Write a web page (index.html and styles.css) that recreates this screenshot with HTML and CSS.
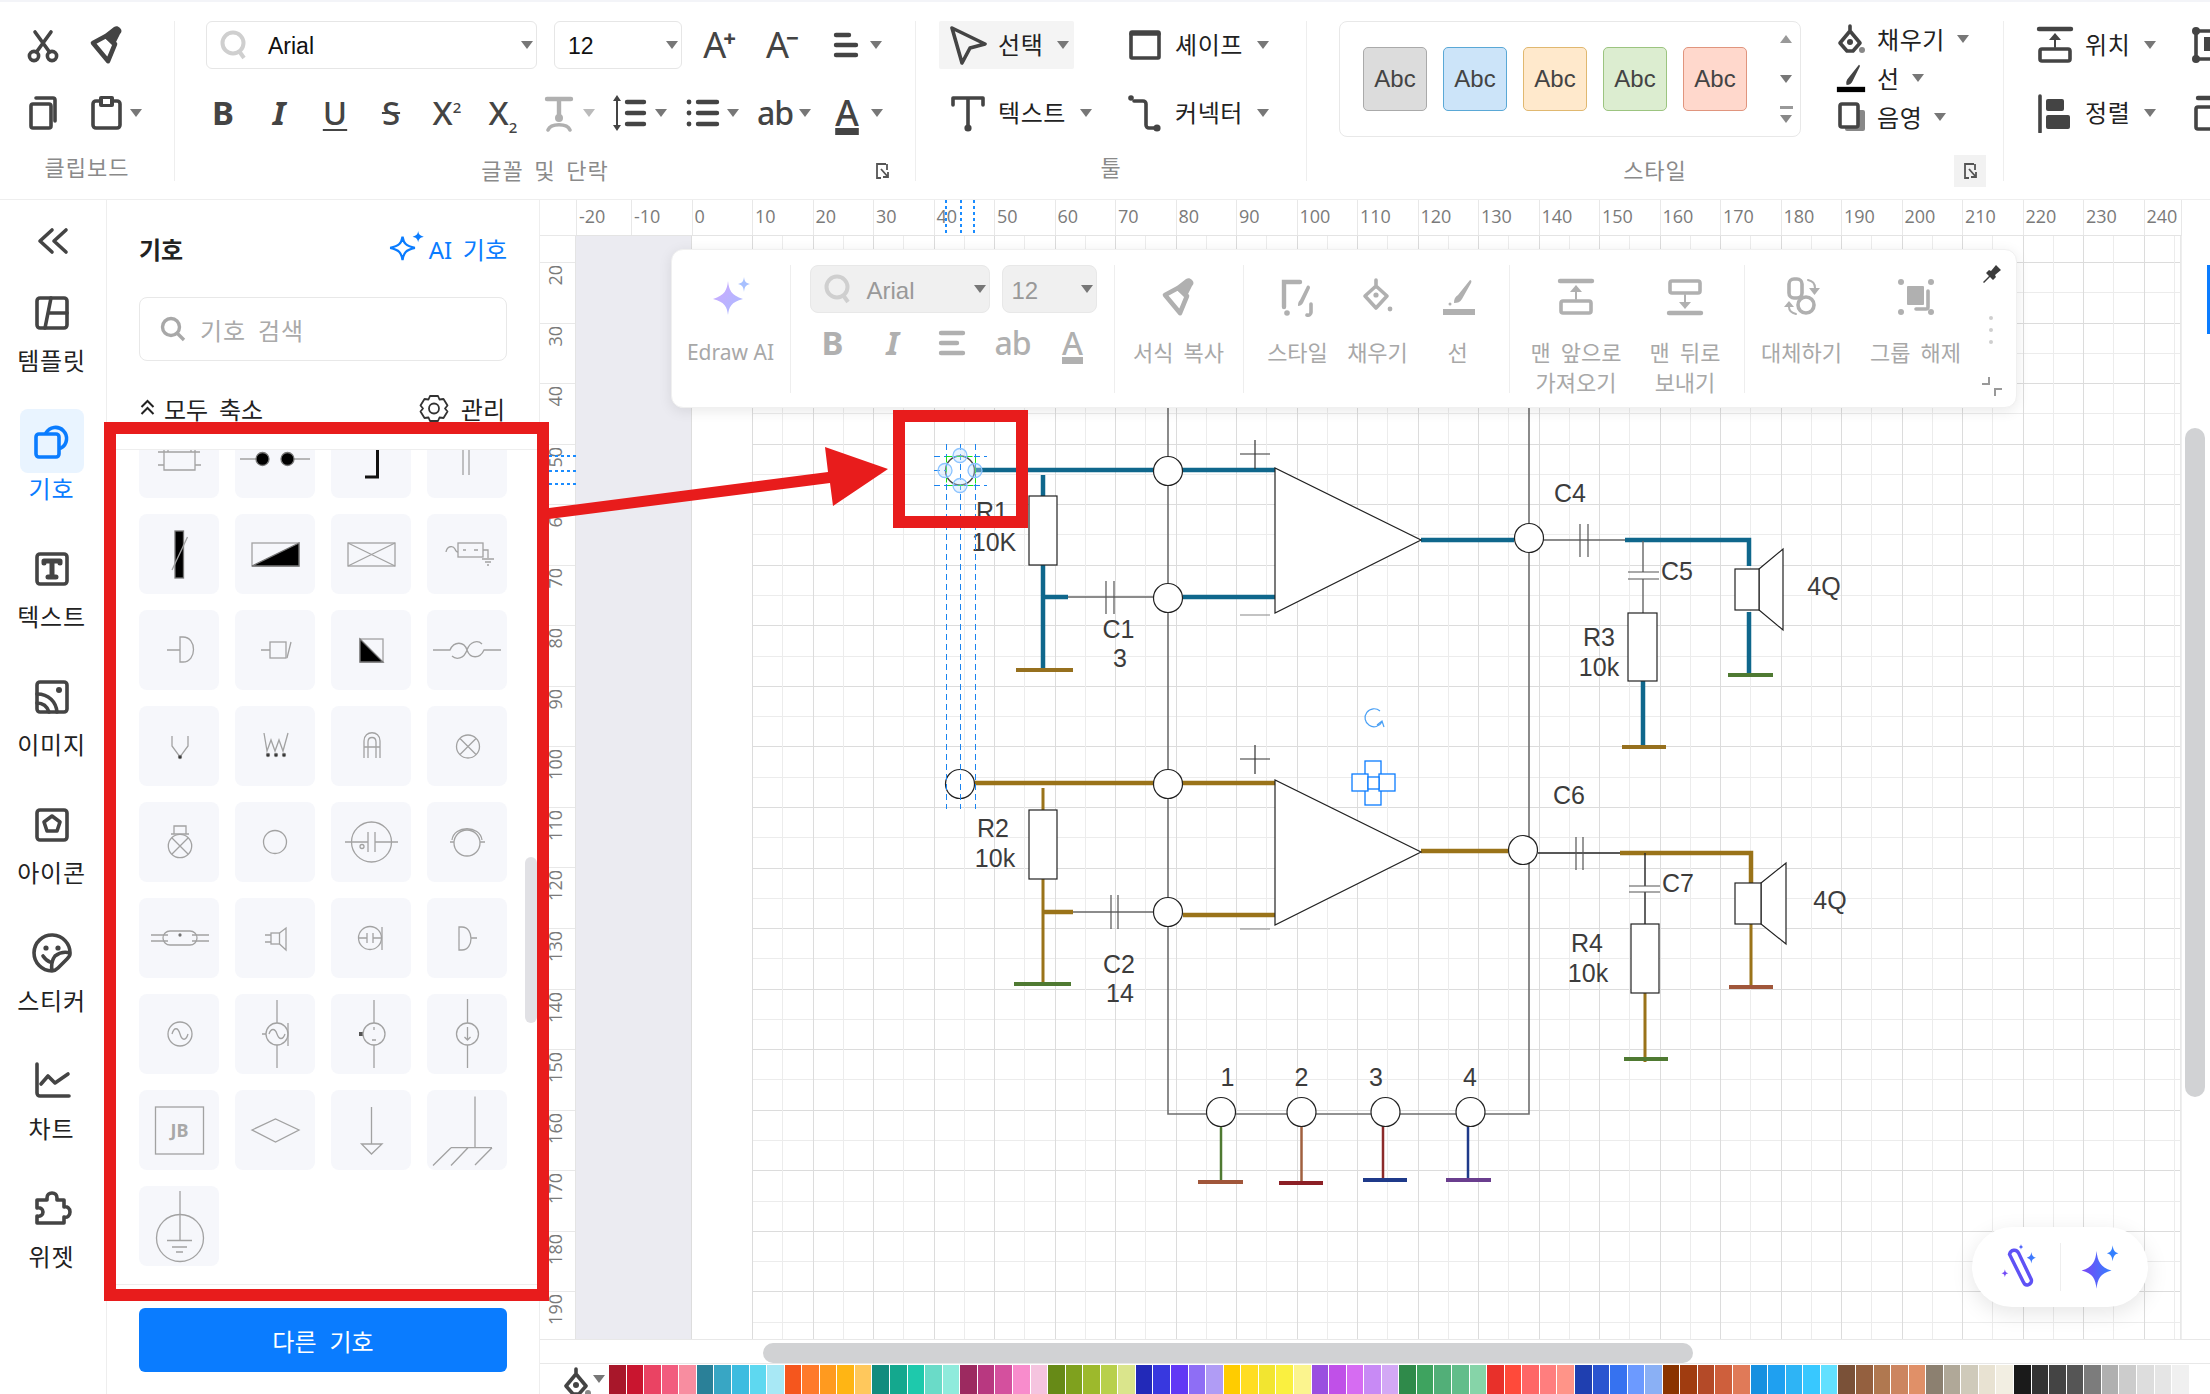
FILE: index.html
```html
<!DOCTYPE html>
<html lang="ko">
<head>
<meta charset="utf-8">
<title>기호</title>
<link rel="stylesheet" href="styles.css">
</head>
<body>
<svg class="defs" aria-hidden="true">
  <defs>
    <linearGradient id="gStar" x1="0" y1="0" x2="1" y2="1"><stop offset="0" stop-color="#d0a8ff"/><stop offset="1" stop-color="#a8bcff"/></linearGradient>
    <linearGradient id="gBub" x1="0" y1="0" x2="1" y2="0"><stop offset="0" stop-color="#7a45f5"/><stop offset="1" stop-color="#3480ff"/></linearGradient>
  </defs>
  <symbol id="i-cut" viewBox="0 0 40 40"><g class="st"><circle cx="11" cy="31" r="4.6"/><circle cx="29" cy="31" r="4.6"/><path d="M13.5 27 28 7M26.5 27 12 7"/></g></symbol>
  <symbol id="i-brush" viewBox="0 0 40 40"><path class="st-b" d="M6 18 19 11l9 8-7 17z"/><path class="fl" d="M18 9l9-7c2-1 4-1 6 1s2 4 0 6l-5 10-3 1-8-8z"/></symbol>
  <symbol id="i-copy" viewBox="0 0 40 40"><rect class="st" x="8" y="11" width="20" height="24" rx="2"/><path class="st" d="M13 5h17a2 2 0 0 1 2 2v21"/></symbol>
  <symbol id="i-paste" viewBox="0 0 40 40"><rect class="st" x="6" y="8" width="27" height="27" rx="3"/><rect class="fl" x="12" y="3" width="15" height="11" rx="2"/><rect class="wh" x="16" y="6" width="7" height="5"/></symbol>
  <symbol id="i-align" viewBox="0 0 40 40"><path class="st4" d="M9 10h13M9 20h20M9 30h20"/></symbol>
  <symbol id="i-alignc" viewBox="0 0 40 40"><path class="st4" d="M8 10h22M8 20h16M8 30h22"/></symbol>
  <symbol id="i-fmt" viewBox="0 0 40 40"><path class="st4" d="M8 6h24M20 6v18"/><circle class="fl" cx="20" cy="25" r="4"/><path class="st" d="M9 37c3-7 19-7 22 0"/></symbol>
  <symbol id="i-lsp" viewBox="0 0 40 40"><path class="st4" d="M16 9h17M16 20h17M16 31h17"/><path class="st2" d="M6 7v26"/><path class="fl" d="M6 2l4 6H2zM6 38l4-6H2z"/></symbol>
  <symbol id="i-list" viewBox="0 0 40 40"><path class="st4" d="M15 9h19M15 20h19M15 31h19"/><circle class="fl" cx="6" cy="9" r="2.4"/><circle class="fl" cx="6" cy="20" r="2.4"/><circle class="fl" cx="6" cy="31" r="2.4"/></symbol>
  <symbol id="i-select" viewBox="0 0 40 40"><path class="st" d="M4 3 37 19l-15 4-8 15z"/></symbol>
  <symbol id="i-shape" viewBox="0 0 40 40"><rect class="st" x="6" y="7" width="28" height="26" rx="1"/><path class="st" d="M6 9h28"/></symbol>
  <symbol id="i-text" viewBox="0 0 40 40"><path class="st" d="M5 12V5h30v7M20 5v28"/><circle class="fl" cx="20" cy="35" r="3.6"/></symbol>
  <symbol id="i-conn" viewBox="0 0 40 40"><circle class="fl" cx="6" cy="5" r="2.8"/><path class="st" d="M9 8h9a3 3 0 0 1 3 3v21a3 3 0 0 0 3 3h5"/><circle class="fl" cx="32" cy="35" r="3.6"/></symbol>
  <symbol id="i-launch" viewBox="0 0 20 20"><path class="ln" d="M14 3H5v14h4M15 3v6M9 8l7 8M16 11v5h-5"/></symbol>
  <symbol id="i-fill" viewBox="0 0 30 30"><path class="st" d="M14 2v5M14 7 4 19l7 8h6l7-8z"/><circle class="fl" cx="14" cy="18" r="3"/><circle class="gr" cx="26" cy="26" r="3"/></symbol>
  <symbol id="i-line" viewBox="0 0 34 34"><path class="fl" d="M26 2c1 0 1 1 1 2l-8 16c-1 3-4 5-7 5-1-3 0-6 2-8z"/><rect class="blk" x="1" y="27" width="32" height="6"/></symbol>
  <symbol id="i-shadow" viewBox="0 0 30 30"><rect class="gr" x="9" y="8" width="20" height="21" rx="2"/><rect class="stw" x="4" y="2" width="18" height="23" rx="2"/></symbol>
  <symbol id="i-pos" viewBox="0 0 40 40"><path class="st4" d="M4 4h32"/><path class="st2" d="M20 22V10"/><path class="fl" d="M20 8l6 7H14z"/><rect class="st" x="5" y="24" width="30" height="12" rx="2"/></symbol>
  <symbol id="i-back" viewBox="0 0 40 40"><path class="st4" d="M4 36h32"/><path class="st2" d="M20 18v12"/><path class="fl" d="M20 32l-6-7h12z"/><rect class="st" x="5" y="4" width="30" height="12" rx="2"/></symbol>
  <symbol id="i-arr" viewBox="0 0 40 40"><path class="st" d="M5 3v36"/><rect class="fl" x="11" y="6" width="18" height="12" rx="2"/><rect class="fl" x="11" y="22" width="24" height="14" rx="2"/></symbol>
  <symbol id="i-grp" viewBox="0 0 40 40"><rect class="st" x="6" y="6" width="28" height="28" rx="2"/><circle class="fl" cx="6" cy="6" r="4"/><circle class="fl" cx="34" cy="6" r="4"/><circle class="fl" cx="6" cy="34" r="4"/><circle class="fl" cx="34" cy="34" r="4"/><rect class="fl" x="14" y="12" width="12" height="14"/></symbol>
  <symbol id="i-ord" viewBox="0 0 40 40"><path class="st4" d="M8 5h24"/><rect class="st" x="6" y="14" width="28" height="22" rx="2"/></symbol>
  <symbol id="i-style" viewBox="0 0 40 40"><path class="st4" d="M6 30V5h16"/><path class="fl" d="M29 9c2-1 3 0 3 2l-7 15c-1 2-3 3-5 3 0-2 0-4 2-6z"/><circle class="fl" cx="9" cy="36" r="2.8"/><path class="st" d="M33 27v8a3 3 0 0 1-4 3"/></symbol>
  <symbol id="i-fill2" viewBox="0 0 40 40"><path class="st" d="M18 3v7M18 9 7 19l11 12 11-12z"/><circle class="fl" cx="18" cy="18" r="2.6"/><circle class="fl" cx="32" cy="32" r="2.4"/></symbol>
  <symbol id="i-line2" viewBox="0 0 40 40"><path class="fl" d="M32 3c1 0 2 1 1 3l-9 16c-2 3-4 4-8 4 0-4 1-6 4-8z"/><circle class="fl" cx="12" cy="27" r="1.5"/><rect class="fl" x="5" y="32" width="32" height="6"/></symbol>
  <symbol id="i-rep" viewBox="0 0 40 40"><rect class="st" x="7" y="2" width="13" height="19" rx="5"/><circle class="st" cx="24" cy="28" r="8"/><path class="st2" d="M26 3c5 1 7 4 7 8"/><path class="fl" d="M27 11h11l-5.500 7z"/><path class="st2" d="M14 37c-4-1-7-3-7-7"/><path class="fl" d="M2 30h10l-5-6z"/></symbol>
  <symbol id="i-ungrp" viewBox="0 0 40 40"><circle class="fl" cx="5" cy="5" r="3"/><circle class="fl" cx="35" cy="5" r="3"/><circle class="fl" cx="5" cy="35" r="3"/><circle class="fl" cx="35" cy="35" r="3"/><rect class="fl" x="11" y="9" width="17" height="19" rx="1"/><path class="st" d="M32 14v16a2 2 0 0 1-2 2H20"/></symbol>
</svg>

<div class="app">
  <header class="ribbon">
    <section class="group g-clip">
      <div class="clip-grid">
        <div class="cell"><svg class="ic"><use href="#i-cut"/></svg></div>
        <div class="cell"><svg class="ic"><use href="#i-brush"/></svg></div>
        <div class="cell"><svg class="ic"><use href="#i-copy"/></svg></div>
        <div class="cell"><svg class="ic"><use href="#i-paste"/></svg><i class="caret caret-near"></i></div>
      </div>
      <div class="glabel"><span></span><span>클립보드</span><span></span></div>
    </section>

    <section class="group g-font">
      <div class="font-row1">
        <div class="combo combo-font"><svg class="q" viewBox="0 0 28 32"><circle cx="13" cy="14" r="10.500"/><path d="M19 22l5 7"/></svg><span class="combo-t">Arial</span><i class="caret"></i></div>
        <div class="combo combo-size"><span class="combo-t">12</span><i class="caret"></i></div>
        <span class="g g-a">A<sup>+</sup></span>
        <span class="g g-a g-am">A<sup>−</sup></span>
        <svg class="ic ic-align"><use href="#i-align"/></svg><i class="caret caret-gap"></i>
      </div>
      <div class="font-row2">
        <span class="g2 bold">B</span>
        <span class="g2 it">I</span>
        <span class="g2"><span class="u">U</span></span>
        <span class="g2"><span class="s">S</span></span>
        <span class="g2">X<sup>2</sup></span>
        <span class="g2">X<sub>2</sub></span>
        <div class="drop first"><svg class="ic ic-fmt"><use href="#i-fmt"/></svg><i class="caret caret-light"></i></div>
        <div class="drop"><svg class="ic"><use href="#i-lsp"/></svg><i class="caret"></i></div>
        <div class="drop"><svg class="ic"><use href="#i-list"/></svg><i class="caret"></i></div>
        <div class="drop"><span class="g2 ab">ab</span><i class="caret"></i></div>
        <div class="drop"><span class="g2 ua">A</span><i class="caret"></i></div>
      </div>
      <div class="glabel"><span></span><span>글꼴 및 단락</span><span class="launch"><svg class="ic-l"><use href="#i-launch"/></svg></span></div>
    </section>

    <section class="group g-tools">
      <div class="tool-grid">
        <div class="tool tool-on"><svg class="ic"><use href="#i-select"/></svg><span>선택</span><i class="caret"></i></div>
        <div class="tool"><svg class="ic"><use href="#i-shape"/></svg><span>셰이프</span><i class="caret"></i></div>
        <div class="tool"><svg class="ic"><use href="#i-text"/></svg><span>텍스트</span><i class="caret"></i></div>
        <div class="tool"><svg class="ic"><use href="#i-conn"/></svg><span>커넥터</span><i class="caret"></i></div>
      </div>
      <div class="glabel"><span></span><span>툴</span><span></span></div>
    </section>

    <section class="group g-style">
      <div class="style-row">
        <div class="style-box">
          <span class="abc a1">Abc</span><span class="abc a2">Abc</span><span class="abc a3">Abc</span><span class="abc a4">Abc</span><span class="abc a5">Abc</span>
          <div class="scroller"><i class="caret caret-up"></i><i class="caret"></i><i class="caret caret-end"></i></div>
        </div>
        <div class="fmt-col">
          <div class="fmt"><svg class="ic-s"><use href="#i-fill"/></svg><span>채우기</span><i class="caret"></i></div>
          <div class="fmt"><svg class="ic-s"><use href="#i-line"/></svg><span>선</span><i class="caret"></i></div>
          <div class="fmt"><svg class="ic-s"><use href="#i-shadow"/></svg><span>음영</span><i class="caret"></i></div>
        </div>
      </div>
      <div class="glabel"><span></span><span>스타일</span><span class="launch launch-on"><svg class="ic-l"><use href="#i-launch"/></svg></span></div>
    </section>

    <section class="group g-arrange">
      <div class="arr-grid">
        <div class="tool"><svg class="ic"><use href="#i-pos"/></svg><span>위치</span><i class="caret"></i></div>
        <svg class="ic ic-cut"><use href="#i-grp"/></svg>
        <div class="tool"><svg class="ic"><use href="#i-arr"/></svg><span>정렬</span><i class="caret"></i></div>
        <svg class="ic ic-cut"><use href="#i-ord"/></svg>
      </div>
    </section>
  </header>

  <main class="main">
    <nav class="rail">
      <div class="rail-top"><svg class="rail-svg" viewBox="0 0 40 40"><path d="M19 9 7 20l12 11M33 9 21 20l12 11"/></svg></div>
      <div class="rail-item"><div class="rail-ico"><svg class="rail-svg" viewBox="0 0 40 40"><rect x="5" y="5" width="30" height="30" rx="3"/><path d="M19 5 13 35M17 20h18"/></svg></div><span>템플릿</span></div>
      <div class="rail-item on"><div class="rail-ico"><svg class="rail-svg" viewBox="0 0 40 40"><rect x="4" y="13" width="23" height="23" rx="3"/><path d="M14 12a11 11 0 1 1 15 15"/></svg></div><span>기호</span></div>
      <div class="rail-item"><div class="rail-ico"><svg class="rail-svg" viewBox="0 0 40 40"><rect x="5" y="5" width="30" height="30" rx="3"/><path class="thick" d="M12 14v-2h16v2M20 12v16M16 28h8"/></svg></div><span>텍스트</span></div>
      <div class="rail-item"><div class="rail-ico"><svg class="rail-svg" viewBox="0 0 40 40"><rect x="5" y="5" width="30" height="30" rx="3"/><path d="M5 17c12 0 19 8 20 18M5 26c6 0 10 3 12 9" /><circle class="dot" cx="27" cy="13" r="3"/></svg></div><span>이미지</span></div>
      <div class="rail-item"><div class="rail-ico"><svg class="rail-svg" viewBox="0 0 40 40"><rect x="5" y="5" width="30" height="30" rx="3"/><path d="M20 11l8 6-3 9H15l-3-9z"/></svg></div><span>아이콘</span></div>
      <div class="rail-item"><div class="rail-ico"><svg class="rail-svg" viewBox="0 0 40 40"><path d="M38 21A18 18 0 1 0 20 38c2 0 4-1 6-3l9-9c2-2 3-3 3-5zM38 20c-6-2-11 0-15 3-3 4-4 9-3 15"/><circle class="dot" cx="14" cy="15" r="2.600"/><circle class="dot" cx="26" cy="15" r="2.600"/><path d="M11 23c2 3 4 5 7 6"/></svg></div><span>스티커</span></div>
      <div class="rail-item"><div class="rail-ico"><svg class="rail-svg" viewBox="0 0 40 40"><path d="M5 3v29a3 3 0 0 0 3 3h29M9 23l7-8 7 7 13-9"/></svg></div><span>차트</span></div>
      <div class="rail-item"><div class="rail-ico"><svg class="rail-svg" viewBox="0 0 40 40"><path d="M15 9c0-3 2-5 5-5s5 2 5 5v2h7v7c3-1 6 1 6 5s-3 6-6 5v6H5v-7c3 1 6-1 6-4s-3-5-6-4v-8h10z"/></svg></div><span>위젯</span></div>
    </nav>

    <aside class="panel">
      <div class="p-head">
        <h2 class="p-title">기호</h2>
        <div class="p-ai"><svg class="p-ai-ic" viewBox="0 0 34 34"><path class="ai-o" d="M13 6c1 6 3 8 11 10-8 2-10 4-11 11-1-7-3-9-11-11 8-2 10-4 11-10z"/><path class="ai-f" d="M27 1c.5 3 1.500 4 5 5-3.500 1-4.500 2-5 5-.5-3-1.500-4-5-5 3.500-1 4.500-2 5-5z"/></svg><span>AI 기호</span></div>
      </div>
      <div class="p-search"><svg class="p-s-ic" viewBox="0 0 28 28"><circle cx="12" cy="12" r="8.500"/><path d="M18 18l7 7"/></svg><span>기호 검색</span></div>
      <div class="p-row">
        <div class="p-col"><svg class="p-chev" viewBox="0 0 16 18"><path d="M2 8l6-6 6 6M2 15l6-6 6 6"/></svg><span>모두 축소</span></div>
        <div class="p-mng"><svg class="p-gear" viewBox="0 0 30 30"><path d="M11 3h8l1.500 3.500 4-.5 4 6.500-2.500 3 2.500 3-4 6.500-4-.5L19 28h-8l-1.500-3.500-4 .5-4-6.500 2.500-3-2.500-3 4-6.500 4 .5z"/><circle cx="15" cy="15.500" r="5"/></svg><span>관리</span></div>
      </div>
      <div class="p-list">
        <div class="sym-grid">
          <div class="sym"><svg viewBox="0 0 80 80"><path d="M19 34h42M25 30v22h31V30M19 47h6M56 47h6M29 34v-4M52 34v-4"/></svg></div>
          <div class="sym"><svg viewBox="0 0 80 80"><path d="M5 41h17M58 41h17"/><circle class="k" cx="27.500" cy="41" r="6.500"/><circle class="k" cx="52.500" cy="41" r="6.500"/></svg></div>
          <div class="sym"><svg viewBox="0 0 80 80"><path class="kl" d="M46.500 30v29H34"/></svg></div>
          <div class="sym"><svg viewBox="0 0 80 80"><path d="M36 30v27M42 30v27"/></svg></div>

          <div class="sym"><svg viewBox="0 0 80 80"><rect class="k" x="36" y="17" width="8.500" height="47"/><path d="M33 56 48.500 23"/></svg></div>
          <div class="sym"><svg viewBox="0 0 80 80"><rect x="17" y="29" width="47" height="23"/><path class="k" d="M17 52 64 29v23z"/></svg></div>
          <div class="sym"><svg viewBox="0 0 80 80"><rect x="17" y="29" width="47" height="23"/><path d="M17 29 64 52M64 29 17 52"/></svg></div>
          <div class="sym"><svg viewBox="0 0 80 80"><rect x="31" y="29" width="25" height="14"/><path d="M19 38c1-6 7-7 9-3 1 3 2 3 3 3M36 36h3M47 36h4M56 36h5v8M55 45h12M58 48h6M60 51h2"/></svg></div>

          <div class="sym"><svg viewBox="0 0 80 80"><path d="M28 40h13M41 27h3c14 0 14 25 0 25h-3z"/></svg></div>
          <div class="sym"><svg viewBox="0 0 80 80"><path d="M26 40h9M52 48l4-16"/><rect x="35" y="32" width="16" height="16"/></svg></div>
          <div class="sym"><svg viewBox="0 0 80 80"><rect x="29" y="29" width="23" height="23"/><path class="k" d="M29 29 52 52H29z"/></svg></div>
          <div class="sym"><svg viewBox="0 0 80 80"><path d="M6 40h17c4-9 14-9 17 0 3 9 13 9 17 0h17M40 40c3-9 11-10 15-6M40 40c-3 9-11 10-15 6"/></svg></div>

          <div class="sym"><svg viewBox="0 0 80 80"><path d="M33 30v10l8 11 8-11V30"/><circle class="k" cx="41" cy="51" r="1.500"/></svg></div>
          <div class="sym"><svg viewBox="0 0 80 80"><path d="M29 27l3 18 4-11 4 11 4-11 4 11 5-18"/><circle class="k" cx="33" cy="49" r="1.500"/><circle class="k" cx="41" cy="49" r="1.500"/><circle class="k" cx="49" cy="49" r="1.500"/></svg></div>
          <div class="sym"><svg viewBox="0 0 80 80"><path d="M33 52V35c0-11 16-11 16 0v17M33 41h16M37 52V36c0-6 8-6 8 0v16"/></svg></div>
          <div class="sym"><svg viewBox="0 0 80 80"><circle cx="41" cy="40.500" r="11.500"/><path d="M33 32.500l16 16M49 32.500l-16 16"/></svg></div>

          <div class="sym"><svg viewBox="0 0 80 80"><circle cx="41" cy="44" r="11.700"/><path d="M33 36l16 16M49 36 33 52M35 32V24h12v8M32 32h18"/></svg></div>
          <div class="sym"><svg viewBox="0 0 80 80"><circle cx="40" cy="40" r="11.500"/></svg></div>
          <div class="sym"><svg viewBox="0 0 80 80"><circle cx="40.500" cy="40" r="20"/><path d="M14 40h23M44 40h23M37 30v20M44 30v20"/><circle cx="31" cy="44.500" r="2"/></svg></div>
          <div class="sym"><svg viewBox="0 0 80 80"><circle cx="40" cy="41" r="13"/><path d="M23 40h4M53 40h5M25 38c2-15 28-15 30 0"/></svg></div>

          <div class="sym"><svg viewBox="0 0 80 80"><rect x="24" y="33" width="34" height="14" rx="7"/><path d="M12 37h17M12 43h17M53 37h17M53 43h17"/><circle class="k" cx="41" cy="37" r="1"/></svg></div>
          <div class="sym"><svg viewBox="0 0 80 80"><rect x="36" y="35" width="8.500" height="11"/><path d="M44.500 35 51 30v22l-6.500-6M30 37h6M30 44h6"/></svg></div>
          <div class="sym"><svg viewBox="0 0 80 80"><circle cx="39" cy="40" r="11.500"/><path d="M28 40h8M42 40h8M36 35v10M42 35v10M51 29v23"/></svg></div>
          <div class="sym"><svg viewBox="0 0 80 80"><path d="M32 29h3c12 0 12 23 0 23h-3zM44 40h6"/></svg></div>

          <div class="sym"><svg viewBox="0 0 80 80"><circle cx="41" cy="40" r="12"/><path d="M33 40c2-7 6-7 8 0s6 7 8 0"/></svg></div>
          <div class="sym"><svg viewBox="0 0 80 80"><path d="M42 6v23M42 51v23M53 29v23M27 40h4"/><circle cx="42" cy="40" r="11"/><path d="M34 40c2-6 6-6 8 0s6 6 8 0"/></svg></div>
          <div class="sym"><svg viewBox="0 0 80 80"><path class="kb" d="M28 40h4"/><path d="M43 6v23M43 51v23M43 33v3M41 46h4"/><circle cx="43" cy="40" r="11"/></svg></div>
          <div class="sym"><svg viewBox="0 0 80 80"><path d="M40.500 5v24M40.500 51v23M40.500 33v13M37.500 43l3 3 3-3"/><circle cx="40.500" cy="40" r="11"/></svg></div>

          <div class="sym"><svg viewBox="0 0 80 80"><rect x="16.500" y="17" width="48" height="47"/><text class="jb" x="40.500" y="47">JB</text></svg></div>
          <div class="sym"><svg viewBox="0 0 80 80"><path d="M17 40 40.500 29 64 40 40.500 52z"/></svg></div>
          <div class="sym"><svg viewBox="0 0 80 80"><path d="M40.500 17v37M30.500 54H51L40.500 64z"/></svg></div>
          <div class="sym"><svg viewBox="0 0 80 80"><path d="M48 6.500v51M24 57.700h41M24 57.700 6 75.500M41 57.700 24 75.500M65 57.700 48 75"/></svg></div>

          <div class="sym"><svg viewBox="0 0 80 80"><path d="M41 5v49M28 54.500h25M33 61h15M37 66h7"/><circle cx="41" cy="52" r="23.500"/></svg></div>
        </div>
        <div class="p-thumb"></div>
      </div>
      <button class="p-btn" type="button">다른 기호</button>
    </aside>

    <div class="workspace">
      <div class="corner"></div>
      <div class="hruler">
        <span class="ht ht-first">-20</span><span class="ht">-10</span><span class="ht">0</span><span class="ht">10</span><span class="ht">20</span><span class="ht">30</span><span class="ht">40</span><span class="ht">50</span><span class="ht">60</span><span class="ht">70</span><span class="ht">80</span><span class="ht">90</span><span class="ht">100</span><span class="ht">110</span><span class="ht">120</span><span class="ht">130</span><span class="ht">140</span><span class="ht">150</span><span class="ht">160</span><span class="ht">170</span><span class="ht">180</span><span class="ht">190</span><span class="ht">200</span><span class="ht">210</span><span class="ht">220</span><span class="ht">230</span><span class="ht">240</span>
      </div>
      <div class="corner corner-r"></div>

      <div class="vruler">
        <span class="vt"><b>20</b></span><span class="vt"><b>30</b></span><span class="vt"><b>40</b></span><span class="vt"><b>50</b></span><span class="vt"><b>60</b></span><span class="vt"><b>70</b></span><span class="vt"><b>80</b></span><span class="vt"><b>90</b></span><span class="vt"><b>100</b></span><span class="vt"><b>110</b></span><span class="vt"><b>120</b></span><span class="vt"><b>130</b></span><span class="vt"><b>140</b></span><span class="vt"><b>150</b></span><span class="vt"><b>160</b></span><span class="vt"><b>170</b></span><span class="vt"><b>180</b></span><span class="vt"><b>190</b></span>
      </div>

      <div class="canvas">
        <div class="off"></div>
        <div class="margin"></div>
        <div class="grid"></div>
        <svg class="diagram" viewBox="576 236 1605 1103">
          <!-- rails -->
          <path class="rail-w" d="M1168 400V1114H1529V400"/>
          <!-- top amp wiring -->
          <path class="teal" d="M976 470H1275M1043 475V496M1043 565V670M1043 597H1068M1183 597H1275M1421 540H1514M1625 540H1749V566M1749 612V675M1643 681V747"/>
          <path class="wire" d="M1068 597H1153M1543 540H1625M1643 541V572M1643 579V613"/>
          <path class="cap" d="M1106 581V614M1114 581V614M1580 524V557M1588 524V557M1628 572H1659M1628 579H1659"/>
          <path class="gnd-br" d="M1016 670H1073M1622 747H1666"/>
          <path class="gnd-gr" d="M1728 675H1773"/>
          <!-- bottom amp wiring -->
          <path class="brown" d="M975 783H1275M1043 912H1073M1183 915H1275M1421 851H1508M1620 853H1751V883"/>
          <path class="brown-t" d="M1043 788V810M1043 879V984M1751 924V987M1645 993V1062"/>
          <path class="wire" d="M1073 912H1153"/>
          <path class="wire-k" d="M1538 853H1620M1645 853V886M1645 892V924"/>
          <path class="cap" d="M1111 895V929M1118 895V929M1576 837V870M1583 837V870M1629 886H1660M1629 892H1660"/>
          <path class="gnd-gr" d="M1014 984H1071M1624 1059H1668"/>
          <path class="gnd-rd" d="M1729 987H1773"/>
          <!-- pins -->
          <path class="pin pin1" d="M1221 1126V1182"/><path class="pin pin2" d="M1301.500 1126V1183"/><path class="pin pin3" d="M1383 1126V1180"/><path class="pin pin4" d="M1468 1126V1180"/>
          <path class="gnd-rd" d="M1198 1182H1243"/><path class="gnd-dr" d="M1279 1183H1323"/><path class="gnd-bl" d="M1363 1180H1407"/><path class="gnd-pu" d="M1446 1180H1491"/>
          <!-- parts -->
          <g class="part">
            <path d="M1275 468V613L1421 540z"/><path d="M1275 780V925L1421 852z"/>
            <rect x="1029" y="496" width="28" height="69"/><rect x="1029" y="810" width="28" height="69"/>
            <rect x="1628" y="613" width="29" height="68"/><rect x="1631" y="924" width="28" height="69"/>
            <path d="M1759 569 1783 549V630L1759 610z"/><rect x="1735" y="569" width="24" height="41"/>
            <path d="M1761 883 1786 863V944L1761 924z"/><rect x="1735" y="883" width="26" height="41"/>
            <circle cx="1168" cy="471" r="14.500"/><circle cx="1168" cy="598" r="14.500"/><circle cx="1529" cy="538" r="14.500"/>
            <circle cx="1168" cy="784" r="14.500"/><circle cx="1168" cy="912" r="14.500"/><circle cx="1523" cy="850" r="14.500"/>
            <circle cx="960" cy="784" r="14.500"/>
            <circle cx="1221" cy="1112" r="14.500"/><circle cx="1301.500" cy="1112" r="14.500"/><circle cx="1385.500" cy="1112" r="14.500"/><circle cx="1470.500" cy="1112" r="14.500"/>
          </g>
          <path class="pm" d="M1255 440V469M1240 454H1270M1255 745V774M1240 759H1270"/>
          <path class="pm-g" d="M1240 615H1270M1240 929H1270"/>
          <!-- labels -->
          <g class="lbl">
            <text x="992" y="511">R1</text><text x="994" y="542">10K</text>
            <text x="1118.500" y="629">C1</text><text x="1120" y="658">3</text>
            <text x="1570" y="493">C4</text><text x="1677" y="571">C5</text><text x="1824" y="586">4Q</text>
            <text x="1599" y="637">R3</text><text x="1599" y="667">10k</text>
            <text x="993" y="828">R2</text><text x="995" y="858">10k</text>
            <text x="1119" y="964">C2</text><text x="1120" y="993">14</text>
            <text x="1569" y="795">C6</text><text x="1678" y="883">C7</text><text x="1830" y="900">4Q</text>
            <text x="1587" y="943">R4</text><text x="1588" y="973">10k</text>
            <text x="1227.500" y="1077">1</text><text x="1301.500" y="1077">2</text><text x="1376" y="1077">3</text><text x="1470" y="1077">4</text>
          </g>
          <!-- selection -->
          <circle class="sel-c" cx="960" cy="470.500" r="14.500"/>
          <path class="guide" d="M946.500 444V809M960.500 444V809M975.500 444V809M934 456.500H987M934 470.500H946M934 485.500H987"/>
          <rect class="sel-g" x="946.500" y="456.500" width="29" height="29"/>
          <g class="hnd"><circle cx="960" cy="455.500" r="7"/><circle cx="960" cy="485.500" r="7"/><circle cx="945" cy="470.500" r="7"/><circle cx="975" cy="470.500" r="7"/></g>
          <path class="rot" d="M1380 711a9 9 0 1 0 2 11M1377 725l5-4 2 6"/>
          <g class="cross"><rect x="1365" y="761" width="16" height="19"/><rect x="1365" y="786" width="16" height="19"/><rect x="1352" y="774" width="16" height="17"/><rect x="1379" y="774" width="16" height="17"/><rect x="1368" y="777" width="11" height="12"/></g>
        </svg>

        <div class="float">
          <div class="f-sec f-ai">
            <svg class="ic" viewBox="0 0 40 40"><path fill="url(#gStar)" d="M17 4c1 9 3 14 15 18C20 25 18 30 17 38 16 30 14 25 2 22 14 18 16 13 17 4z"/><path fill="#a8c0ff" d="M33 0c.6 4 1.500 6 6 7-4.500 1-5.400 3-6 8-.6-5-1.500-7-6-8 4.500-1 5.400-3 6-7z"/></svg>
            <span class="f-lab f-lab-ai">Edraw AI</span>
          </div>
          <div class="f-sec f-font">
            <div class="f-row1">
              <div class="fcombo fc-font"><svg class="q q-f" viewBox="0 0 28 32"><circle cx="13" cy="14" r="10.500"/><path d="M19 22l5 7"/></svg><span>Arial</span><i class="caret"></i></div>
              <div class="fcombo fc-size"><span>12</span><i class="caret"></i></div>
            </div>
            <div class="f-row2">
              <span class="g2 bold">B</span><span class="g2 it">I</span><svg class="ic"><use href="#i-alignc"/></svg><span class="g2 ab">ab</span><span class="g2 ua">A</span>
            </div>
          </div>
          <div class="f-sec f-one"><svg class="ic"><use href="#i-brush"/></svg><span class="f-lab">서식 복사</span></div>
          <div class="f-sec f-multi f-m3">
            <div class="f-item f80"><svg class="ic"><use href="#i-style"/></svg><span class="f-lab">스타일</span></div>
            <div class="f-item f80"><svg class="ic"><use href="#i-fill2"/></svg><span class="f-lab">채우기</span></div>
            <div class="f-item f80"><svg class="ic"><use href="#i-line2"/></svg><span class="f-lab">선</span></div>
          </div>
          <div class="f-sec f-multi f-m2">
            <div class="f-item f110"><svg class="ic"><use href="#i-pos"/></svg><span class="f-lab">맨 앞으로<br>가져오기</span></div>
            <div class="f-item f110"><svg class="ic"><use href="#i-back"/></svg><span class="f-lab">맨 뒤로<br>보내기</span></div>
          </div>
          <div class="f-multi f-m5">
            <div class="f-item f115"><svg class="ic"><use href="#i-rep"/></svg><span class="f-lab">대체하기</span></div>
            <div class="f-item f115"><svg class="ic"><use href="#i-ungrp"/></svg><span class="f-lab">그룹 해제</span></div>
          </div>
          <svg class="f-side" viewBox="0 0 40 159">
            <path class="pin-ic" d="M12 23l3-3 2 1 5-6 5 5-6 5 1 2-3 3-3-3-6 6-1-1 6-6z"/>
            <circle class="d3" cx="17" cy="68" r="2"/><circle class="d3" cx="17" cy="80" r="2"/><circle class="d3" cx="17" cy="92" r="2"/>
            <path class="cor" d="M15 127v7H8M21 146v-7h7"/>
          </svg>
        </div>

        <div class="bubble">
          <svg class="bub-ic" viewBox="0 0 40 40"><path class="bub-st" d="M10 9c1-4 6-5 8-1l11 23c1 4-5 7-7 2z"/><path fill="url(#gBub)" d="M29 7c.5 3 1 4 4 5-3 1-3.500 2-4 5-.5-3-1-4-4-5 3-1 3.500-2 4-5zM6 22c.3 2 .8 3 3 3.500-2.200.5-2.700 1.500-3 3.500-.3-2-.8-3-3-3.500 2.200-.5 2.700-1.500 3-3.500zM20 0c.2 1.500.6 2 2 2.500-1.400.5-1.800 1-2 2.500-.2-1.500-.6-2-2-2.500 1.400-.5 1.800-1 2-2.500z"/></svg>
          <span class="bub-div"></span>
          <svg class="bub-ic" viewBox="0 0 40 40"><path fill="url(#gBub)" d="M17 6c1 9 3 14 13 17C20 26 18 30 17 39 16 30 14 26 4 23 14 20 16 15 17 6z"/><path fill="#3480ff" d="M31 1c.5 4 1.500 6 5 7-3.500 1-4.500 3-5 7-.5-4-1.500-6-5-7 3.500-1 4.500-3 5-7z"/></svg>
        </div>
      </div>

      <div class="vscroll"><div class="vthumb"></div><div class="vblue"></div></div>
      <div class="hscroll"><div class="hthumb"></div></div>
      <div class="palette">
        <svg class="ic-s pal-ic"><use href="#i-fill"/></svg><i class="caret"></i>
        <div class="swatches"><i></i><i></i><i></i><i></i><i></i><i></i><i></i><i></i><i></i><i></i><i></i><i></i><i></i><i></i><i></i><i></i><i></i><i></i><i></i><i></i><i></i><i></i><i></i><i></i><i></i><i></i><i></i><i></i><i></i><i></i><i></i><i></i><i></i><i></i><i></i><i></i><i></i><i></i><i></i><i></i><i></i><i></i><i></i><i></i><i></i><i></i><i></i><i></i><i></i><i></i><i></i><i></i><i></i><i></i><i></i><i></i><i></i><i></i><i></i><i></i><i></i><i></i><i></i><i></i><i></i><i></i><i></i><i></i><i></i><i></i><i></i><i></i><i></i><i></i><i></i><i></i><i></i><i></i><i></i><i></i><i></i><i></i><i></i><i></i><i></i><i></i><i></i><i></i><i></i><i></i></div>
      </div>
    </div>
  </main>

  <svg class="annot" viewBox="0 0 2210 1394" aria-hidden="true">
    <path class="dots" d="M946 200V236M961 200V236M974 200V236M549 456H576M549 471H576M549 484H576"/>
    <rect class="red-box" x="110" y="428" width="433" height="867"/>
    <rect class="red-box" x="899" y="416" width="123" height="106"/>
    <path class="red-fill" d="M549 508 828 472 825 447 888 469 833 506 830 483 549 519z"/>
  </svg>
</div>
</body>
</html>
```

FILE: styles.css
```css
*{box-sizing:border-box}
html,body{margin:0;padding:0;background:#fff}
body{font-family:"Noto Sans","Noto Sans CJK KR",sans-serif;color:#333;word-spacing:.28em}
.defs{position:absolute;width:0;height:0}
.app{position:relative;width:2210px;height:1394px;overflow:hidden;background:#fff}
i{font-style:normal;display:block}

/* shared icon paints */
.st{fill:none;stroke:currentColor;stroke-width:3.6;stroke-linejoin:round;stroke-linecap:round}
.st-b{fill:none;stroke:currentColor;stroke-width:4.6;stroke-linejoin:round}
.st2{fill:none;stroke:currentColor;stroke-width:2;stroke-linecap:round}
.st4{fill:none;stroke:currentColor;stroke-width:4.4;stroke-linecap:round}
.stw{fill:#fff;stroke:currentColor;stroke-width:3.6}
.ln{fill:none;stroke:currentColor;stroke-width:1.8}
.fl{fill:currentColor}
.wh{fill:#fff}
.gr{fill:#888}
.blk{fill:#000}
.ic{width:40px;height:40px;color:#444;flex:none;display:block}
.ic-s{width:30px;height:30px;color:#444;flex:none;display:block}
.ic-l{width:20px;height:20px;color:#555;display:block}
.caret{width:0;height:0;flex:none;border-left:6.5px solid transparent;border-right:6.5px solid transparent;border-top:8px solid #777}
.caret-light{border-top-color:#bbb}

/* ribbon */
.ribbon{height:200px;border-top:2px solid #f3f4f8;border-bottom:1px solid #eee;padding-top:19px;display:flex}
.group{height:160px;border-right:1px solid #eee;flex:none;font-size:24px}
.g-clip{width:175px}
.g-font{width:741px}
.g-tools{width:391px}
.g-style{width:697px}
.g-arrange{flex:1;border-right:0;overflow:hidden}
.glabel{display:grid;grid-template-columns:1fr auto 1fr;align-items:center;height:32px;margin-top:13px;font-size:22px;letter-spacing:1px;word-spacing:4px;color:#8a8a8a}
.launch{justify-self:end;margin:5px 17px 0 0;width:32px;height:32px;display:flex;align-items:center;justify-content:center}
.launch-on{background:#f2f2f2}
.clip-grid{display:grid;grid-template-columns:64px 64px;grid-auto-rows:48px;row-gap:20px;margin-left:11px}
.cell{display:flex;align-items:center;padding-left:12px}
.caret-near{margin-left:3px}

.font-row1{display:flex;align-items:center;height:48px;padding-left:31px}
.combo{height:48px;border:1px solid #e6e6e6;border-radius:6px;display:flex;align-items:center;flex:none;font-family:"Liberation Sans",sans-serif;color:#111}
.combo-font{width:331px;padding:0 3px 0 13px}
.combo-size{width:128px;margin-left:17px;padding:0 3px 0 13px}
.combo-t{flex:1;font-size:23px;padding-top:3px}
.q{width:28px;height:34px;fill:none;stroke:#cfcfcf;stroke-width:4;margin-right:20px;flex:none}
.g{font-family:"Noto Sans",sans-serif;color:#444;flex:none;display:block;text-align:center;line-height:48px}
.g-a{font-size:36px;width:44px;margin-left:15px;letter-spacing:-1px}
.g-am{margin-left:19px}
.g-a sup{font-size:22px;font-weight:800;vertical-align:12px;line-height:0;margin-left:-2px}
.ic-align{margin-left:23px}
.caret-gap{margin-left:3px}

.font-row2{display:flex;align-items:center;height:48px;margin-top:20px;padding-left:20px}
.g2{width:56px;flex:none;text-align:center;font-family:"Noto Sans",sans-serif;font-size:33px;color:#444;line-height:48px;font-weight:500}
.g2 sup,.g2 sub{font-size:15px;line-height:0}
.bold{font-weight:700}
.it{font-style:italic;font-weight:700}
.u{text-decoration:underline;text-decoration-thickness:2px;text-underline-offset:4px}
.s{text-decoration:line-through;text-decoration-thickness:2px}
.drop{display:flex;align-items:center;gap:4px;margin-left:16px;flex:none}
.drop.first{margin-left:8px}
.drop .g2{width:40px}
.ic-fmt{color:#b0b0b0}
.ab{font-size:32px;letter-spacing:-1px}
.ua{position:relative;text-decoration:underline;text-decoration-thickness:7px;text-underline-offset:2px;text-decoration-skip-ink:none;font-size:36px}

.tool-grid{display:grid;grid-template-columns:135px 158px;grid-auto-rows:48px;column-gap:42px;row-gap:20px;margin-left:23px}
.tool{display:flex;align-items:center;padding-left:9px;white-space:nowrap;color:#222}
.tool span{margin-left:10px;padding-bottom:3px;letter-spacing:.6px}
.tool .caret{margin-left:14px}
.tool-on{background:#f4f4f4;border-radius:2px}

.style-row{display:flex;align-items:flex-start;padding-left:32px}
.style-box{width:462px;height:116px;border:1px solid #e8e8e8;border-radius:8px;display:flex;align-items:center;gap:16px;padding-left:23px;flex:none}
.abc{width:64px;height:64px;border-radius:5px;border:1px solid;display:flex;align-items:center;justify-content:center;font:24px "Liberation Sans",sans-serif;color:#444;flex:none}
.a1{background:#dcdcdc;border-color:#aaa}
.a2{background:#cce4f9;border-color:#5aa8d6}
.a3{background:#ffe9cc;border-color:#e0b870}
.a4{background:#dcedd0;border-color:#9cc480}
.a5{background:#ffd8cc;border-color:#e0957e}
.scroller{display:flex;flex-direction:column;align-items:center;justify-content:space-between;height:88px;width:30px;margin-left:9px}
.caret-up{transform:rotate(180deg);border-top-color:#999}
.caret-end{border-top-color:#888;position:relative}
.caret-end::before{content:"";position:absolute;left:-6.5px;top:-17px;width:13px;height:3px;background:#999}
.fmt-col{margin-left:35px;margin-top:-2px;flex:none}
.fmt{height:39px;display:flex;align-items:center;white-space:nowrap;color:#222}
.fmt span{margin-left:11px;letter-spacing:.6px}
.fmt .caret{margin-left:12px}

.arr-grid{display:grid;grid-template-columns:152px 40px;grid-auto-rows:48px;column-gap:12px;row-gap:20px;margin-left:22px}
.ic-cut{margin-top:4px}

/* body */
.main{display:flex;height:1194px}
.rail{width:107px;border-right:1px solid #eee;flex:none;font-size:24px}
.rail-top{height:81px;display:flex;align-items:center;justify-content:center}
.rail-svg{width:40px;height:40px;fill:none;stroke:#444;stroke-width:3.6;stroke-linejoin:round;stroke-linecap:round}
.rail-svg .dot{fill:#444;stroke:none}
.rail-svg .thick{stroke-width:5}
.rail-item{height:128px;display:flex;flex-direction:column;align-items:center;color:#222;line-height:32px;padding-right:3px}
.rail-ico{width:64px;height:64px;border-radius:8px;display:flex;align-items:center;justify-content:center;margin-bottom:0}
.rail-item span{margin-top:0;height:32px;letter-spacing:.8px}
.rail-item.on{color:#0a7cff}
.rail-item.on .rail-ico{background:#e9f4ff}
.rail-item.on .rail-svg{stroke:#0a7cff}

.panel{width:432px;flex:none;position:relative;font-size:24px}
.p-head{height:97px;padding:0 32px;display:flex;align-items:center;justify-content:space-between}
.p-title{margin:0;font-size:24px;font-weight:700;color:#222}
.p-ai{display:flex;align-items:center;color:#0a7cff;gap:3px}
.p-ai-ic{width:38px;height:38px}
.ai-o{fill:none;stroke:#0a7cff;stroke-width:2}
.ai-f{fill:#0a7cff}
.p-search{margin:0 32px;height:64px;border:1px solid #e8e8e8;border-radius:8px;display:flex;align-items:center;padding-left:19px;color:#aaa;letter-spacing:1px}
.p-s-ic{width:28px;height:28px;fill:none;stroke:#a8a8a8;stroke-width:3.400;margin-right:13px;flex:none}
.p-row{margin:23px 32px 0;height:48px;display:flex;align-items:center;justify-content:space-between;color:#222}
.p-col{display:flex;align-items:center;gap:8px}
.p-chev{width:17px;height:18px;fill:none;stroke:#222;stroke-width:2}
.p-mng{display:flex;align-items:center;gap:12px;margin-right:2px}
.p-gear{width:30px;height:30px;fill:none;stroke:#333;stroke-width:1.800;stroke-linejoin:round}
.p-list{margin-top:17px;height:836px;border-top:1px solid #eee;border-bottom:1px solid #eee;padding:0 32px;overflow:hidden;position:relative}
.sym-grid{display:grid;grid-template-columns:repeat(4,80px);grid-auto-rows:80px;gap:16px;margin-top:-32px}
.sym{background:#f6f7fb;border-radius:8px}
.sym svg{width:80px;height:80px;display:block;fill:none;stroke:#a2a2a2;stroke-width:1.300;overflow:visible}
.sym .k{fill:#000;stroke:#777}
.sym .kl{stroke:#111;stroke-width:3}
.sym .kb{stroke:#555;stroke-width:4}
.sym .jb{font:bold 18px "Noto Sans",sans-serif;fill:#a8a8a8;stroke:none;text-anchor:middle}
.p-thumb{position:absolute;right:2px;top:407px;width:12px;height:166px;border-radius:6px;background:#e1e1e5}
.p-btn{display:block;margin:23px 32px 0;width:368px;height:64px;border:0;border-radius:6px;background:#0a7cff;color:#fff;font:24px "Noto Sans","Noto Sans CJK KR",sans-serif;word-spacing:.28em}

/* workspace */
.workspace{flex:1;border-left:1px solid #eee;display:grid;grid-template-columns:36px 1605px 29px;grid-template-rows:36px 1103px 25px 30px;min-width:0}
.corner{border-bottom:1px solid #e8e8e8}
.corner-r{border-left:1px solid #e8e8e8;border-bottom:0}
.hruler{display:flex;overflow:hidden;border-bottom:1px solid #e4e4e4;font-family:"Open Sans",sans-serif;font-size:18px;color:#7a7a7a}
.ht{flex:none;width:60.5px;border-left:1px solid #e8e8e8;padding-left:2px;line-height:33px;white-space:nowrap}
.ht-first{width:55px}
.vruler{display:flex;flex-direction:column;padding-top:26px;overflow:hidden;font-family:"Open Sans",sans-serif;font-size:18px;color:#7a7a7a;border-right:1px solid #e4e4e4}
.vt{flex:none;height:60.55px;border-top:1px solid #e8e8e8;display:flex;justify-content:center;align-items:flex-start;padding:2px 6px 0 0}
.vt b{font-weight:400;writing-mode:vertical-rl;transform:rotate(180deg);line-height:1}
.canvas{position:relative;display:flex;overflow:hidden;background:#fff}
.off{width:115.5px;flex:none;background:#ebebf1;border-right:1px solid #ddd}
.margin{width:60.5px;flex:none}
.grid{flex:1;border-right:1px solid #e8e8e8;background-image:
  repeating-linear-gradient(to right,#dcdcdc 0 1px,transparent 1px 60.5px),
  repeating-linear-gradient(to right,transparent 0 30.25px,#ececec 30.25px 31.25px,transparent 31.25px 60.5px),
  repeating-linear-gradient(to bottom,transparent 0 26px,#dcdcdc 26px 27px,transparent 27px 60.55px),
  repeating-linear-gradient(to bottom,transparent 0 56.27px,#ececec 56.27px 57.27px,transparent 57.27px 60.55px)}
.diagram{position:absolute;left:0;top:0;width:1605px;height:1103px}
.rail-w{fill:none;stroke:#6e6e6e;stroke-width:1.600}
.teal{fill:none;stroke:#0f678c;stroke-width:4.500}
.brown{fill:none;stroke:#9a7319;stroke-width:4.500}
.brown-t{fill:none;stroke:#9a7319;stroke-width:3}
.wire{fill:none;stroke:#666;stroke-width:1.400}
.wire-k{fill:none;stroke:#222;stroke-width:1.400}
.cap{fill:none;stroke:#555;stroke-width:1.200}
.gnd-br,.gnd-gr,.gnd-rd,.gnd-dr,.gnd-bl,.gnd-pu{fill:none;stroke-width:4}
.gnd-br{stroke:#96701e}
.gnd-gr{stroke:#4f7a32}
.gnd-rd{stroke:#a0563a}
.gnd-dr{stroke:#8c2026}
.gnd-bl{stroke:#1f3a8a}
.gnd-pu{stroke:#6a3e8e}
.pin{fill:none;stroke-width:2.500}
.pin1{stroke:#4f7a32}
.pin2{stroke:#a0603f}
.pin3{stroke:#8c2a2a}
.pin4{stroke:#1f3a8a}
.part{fill:#fff;stroke:#222;stroke-width:1.200}
.pm{fill:none;stroke:#333;stroke-width:1.200}
.pm-g{fill:none;stroke:#888;stroke-width:1.200}
.lbl text{font:25px "Liberation Sans",sans-serif;fill:#3c3c3c;text-anchor:middle;dominant-baseline:central;word-spacing:0}
.sel-c{fill:#fff;stroke:#444;stroke-width:1.400}
.guide{fill:none;stroke:#1a84f0;stroke-width:1;stroke-dasharray:6 4}
.sel-g{fill:none;stroke:#14e014;stroke-width:1;stroke-dasharray:6 4}
.hnd circle{fill:rgba(190,220,255,.35);stroke:#8cc4ff;stroke-width:1.300}
.rot{fill:none;stroke:#4aa0f5;stroke-width:1.200}
.cross rect{fill:#fff;stroke:#0a7cff;stroke-width:1.300}

/* floating bar */
.float{position:absolute;left:94.500px;top:13px;width:1346px;height:159px;background:#fff;border:1px solid #f0f0f0;border-radius:12px;box-shadow:0 3px 14px rgba(0,0,0,.09);display:flex;padding-top:15px;font-size:22px;color:#a8a8a8;z-index:2}
.float .ic{color:#b0b0b0}
.f-sec{border-right:1px solid #eee;height:128px;flex:none}
.f-ai{width:119px;display:flex;flex-direction:column;align-items:center;padding-top:12px}
.f-ai .ic{margin-left:-6px}
.f-lab{display:block;text-align:center;line-height:30px;margin-top:20px;white-space:nowrap}
.f-lab-ai{font-family:"Noto Sans",sans-serif;font-size:21px;word-spacing:0;margin-left:0}
.f-font{width:324px;padding-left:19px}
.f-row1{display:flex;gap:12px}
.fcombo{height:48px;background:#f0f0f0;border:1px solid #e8e8e8;border-radius:8px;display:flex;align-items:center;font-family:"Liberation Sans",sans-serif;font-size:24px;color:#999;flex:none;padding-right:3px}
.fcombo span{flex:1;padding-top:3px}
.fc-font{width:180px;padding-left:13px}
.fc-size{width:95px;padding-left:9px}
.q-f{margin-right:15px}
.f-row2{display:flex;margin-top:10px;padding-left:3px;height:40px;align-items:center}
.float .g2{color:#b0b0b0;width:40px;margin-right:20px}
.float .ic{margin:0}
.f-row2 .ic{margin-right:20px}
.f-row2 .ua{font-size:32px}
.f-one{width:129px;display:flex;flex-direction:column;align-items:center;padding-top:12px}
.f-multi{display:flex;flex:none}
.f-m3{width:266px;padding-left:14px}
.f-m2{width:235px;padding-left:12px}
.f-m5{width:229px}
.f-item{display:flex;flex-direction:column;align-items:center;padding-top:12px;flex:none}
.f80{width:80px}
.f110{width:109px}
.f115{width:114px}
.f-side{width:40px;height:159px;margin-top:-15px;flex:none;display:block}
.pin-ic{fill:#3c3c3c}
.d3{fill:#cfcfcf}
.cor{fill:none;stroke:#999;stroke-width:2}

.bubble{position:absolute;left:1396px;top:991px;width:176px;height:80px;border-radius:40px;background:#fff;box-shadow:0 6px 22px rgba(0,0,0,.1);display:flex;align-items:center;justify-content:center;gap:16px;z-index:2}
.bub-ic{width:46px;height:46px;flex:none}
.bub-st{fill:none;stroke:#5f52f5;stroke-width:3}
.bub-div{width:1px;height:48px;background:#eee}

.vscroll{position:relative;border-left:1px solid #eee;background:#fff}
.vthumb{position:absolute;left:3px;top:192px;width:20px;height:669px;border-radius:10px;background:#d1d2d4}
.vblue{position:absolute;right:0;top:29px;width:3px;height:69px;background:#0a7cff}
.hscroll{grid-column:1/-1;padding:3px 0 0 223px;border-bottom:1px solid #e8e8e8;border-top:1px solid #e8e8e8}
.hthumb{width:930px;height:20px;border-radius:10px;background:#d1d2d4}
.palette{grid-column:1/-1;display:flex;align-items:flex-start;padding:1px 0 0 22px;overflow:hidden}
.pal-ic{margin-top:2px}
.palette .caret{margin:10px 0 0 1px}
.swatches{display:flex;width:1581px;height:30px;margin-left:4px;flex:none}
.swatches i{flex:1;margin-right:1px}
.swatches i:nth-child(1){background:#a8172a}.swatches i:nth-child(2){background:#c9152f}.swatches i:nth-child(3){background:#ea4363}.swatches i:nth-child(4){background:#f25c7e}.swatches i:nth-child(5){background:#f88da0}
.swatches i:nth-child(6){background:#2a8098}.swatches i:nth-child(7){background:#38a6c4}.swatches i:nth-child(8){background:#3dbce0}.swatches i:nth-child(9){background:#5ed8f0}.swatches i:nth-child(10){background:#a8e8f5}
.swatches i:nth-child(11){background:#f5561d}.swatches i:nth-child(12){background:#ff7a2b}.swatches i:nth-child(13){background:#ff9a1f}.swatches i:nth-child(14){background:#ffb514}.swatches i:nth-child(15){background:#ffc85c}
.swatches i:nth-child(16){background:#128c7e}.swatches i:nth-child(17){background:#14a88e}.swatches i:nth-child(18){background:#1ec9ac}.swatches i:nth-child(19){background:#6adbc8}.swatches i:nth-child(20){background:#8febdc}
.swatches i:nth-child(21){background:#9c2a60}.swatches i:nth-child(22){background:#b83880}.swatches i:nth-child(23){background:#d4509e}.swatches i:nth-child(24){background:#f88ccc}.swatches i:nth-child(25){background:#f5c4df}
.swatches i:nth-child(26){background:#678a17}.swatches i:nth-child(27){background:#7fa11e}.swatches i:nth-child(28){background:#9db92c}.swatches i:nth-child(29){background:#b8d04c}.swatches i:nth-child(30){background:#dae58c}
.swatches i:nth-child(31){background:#2229b8}.swatches i:nth-child(32){background:#3838df}.swatches i:nth-child(33){background:#6138f5}.swatches i:nth-child(34){background:#8e6ef5}.swatches i:nth-child(35){background:#b09cf5}
.swatches i:nth-child(36){background:#ffcc00}.swatches i:nth-child(37){background:#ffdd22}.swatches i:nth-child(38){background:#f2e530}.swatches i:nth-child(39){background:#faf040}.swatches i:nth-child(40){background:#fbf48e}
.swatches i:nth-child(41){background:#9a4fe0}.swatches i:nth-child(42){background:#c050e8}.swatches i:nth-child(43){background:#d66cf2}.swatches i:nth-child(44){background:#c88af5}.swatches i:nth-child(45){background:#d3a8f5}
.swatches i:nth-child(46){background:#2f8a4a}.swatches i:nth-child(47){background:#3ea35f}.swatches i:nth-child(48){background:#52af78}.swatches i:nth-child(49){background:#62bd8a}.swatches i:nth-child(50){background:#86d4a8}
.swatches i:nth-child(51){background:#e8302a}.swatches i:nth-child(52){background:#ff4a3a}.swatches i:nth-child(53){background:#ff6666}.swatches i:nth-child(54){background:#ff7e7e}.swatches i:nth-child(55){background:#ff9488}
.swatches i:nth-child(56){background:#1f3fb0}.swatches i:nth-child(57){background:#2a54d0}.swatches i:nth-child(58){background:#3672f0}.swatches i:nth-child(59){background:#6c9aff}.swatches i:nth-child(60){background:#8ab0f5}
.swatches i:nth-child(61){background:#8a3400}.swatches i:nth-child(62){background:#a03c10}.swatches i:nth-child(63){background:#b44a28}.swatches i:nth-child(64){background:#ce5f3c}.swatches i:nth-child(65){background:#e07a58}
.swatches i:nth-child(66){background:#1690e0}.swatches i:nth-child(67){background:#1fa0f0}.swatches i:nth-child(68){background:#2eb4f5}.swatches i:nth-child(69){background:#38c8ff}.swatches i:nth-child(70){background:#62e0ff}
.swatches i:nth-child(71){background:#7a5138}.swatches i:nth-child(72){background:#94603f}.swatches i:nth-child(73){background:#b07850}.swatches i:nth-child(74){background:#cc8560}.swatches i:nth-child(75){background:#e09068}
.swatches i:nth-child(76){background:#8c8070}.swatches i:nth-child(77){background:#b0a898}.swatches i:nth-child(78){background:#cfcaba}.swatches i:nth-child(79){background:#e8e2d2}.swatches i:nth-child(80){background:#f2eee2}
.swatches i:nth-child(81){background:#1a1a1a}.swatches i:nth-child(82){background:#333}.swatches i:nth-child(83){background:#444}.swatches i:nth-child(84){background:#555}.swatches i:nth-child(85){background:#7c7c7c}
.swatches i:nth-child(86){background:#b0b0b0}.swatches i:nth-child(87){background:#ccc}.swatches i:nth-child(88){background:#ddd}.swatches i:nth-child(89){background:#e5e5e5}.swatches i:nth-child(90){background:#f0f0f0}

/* annotation layer */
.annot{position:absolute;left:0;top:0;width:2210px;height:1394px;pointer-events:none;z-index:5}
.dots{fill:none;stroke:#1a8cff;stroke-width:2;stroke-dasharray:3 3}
.red-box{fill:none;stroke:#e81c1c;stroke-width:12}
.red-fill{fill:#e81c1c}
```
